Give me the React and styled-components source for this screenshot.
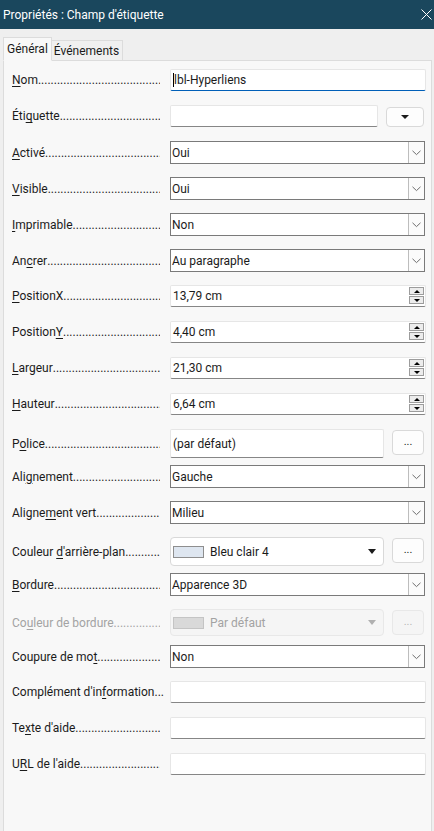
import React from "react";
import styled, { createGlobalStyle, css } from "styled-components";

const Global = createGlobalStyle`
  html, body { margin: 0; padding: 0; }
  body {
    background: #efefef;
    font-family: Roboto, "Noto Sans", sans-serif;
    font-size: 12px;
    color: #1b1b1b;
  }
  #root { width: 434px; }
`;

const Window = styled.div`
  width: 434px;
  height: 831px;
  display: flex;
  flex-direction: column;
  overflow: hidden;
  background: #efefef;
`;

const TitleBar = styled.div`
  height: 29px;
  flex: none;
  background: #1a475d;
  color: #ffffff;
  display: flex;
  align-items: center;
  justify-content: space-between;
  padding: 0 1px 0 3px;
`;

const Title = styled.span`
  font-size: 12px;
`;

const Close = styled.div`
  width: 14px;
  height: 14px;
  display: flex;
  align-items: center;
  justify-content: center;
`;

const TabStrip = styled.div`
  display: flex;
  align-items: flex-end;
  height: 32px;
  flex: none;
  padding-left: 3px;
  margin-bottom: -1px;
  position: relative;
  z-index: 1;
`;

const Tab = styled.div`
  box-sizing: border-box;
  display: flex;
  align-items: center;
  border: 1px solid #dcdcdc;
  font-size: 12px;
  color: #1b1b1b;
  ${(p) =>
    p.$active
      ? css`
          height: 24px;
          padding: 0 3px 0 3px;
          background: #f8f8f8;
          border-bottom-color: #f8f8f8;
        `
      : css`
          height: 20px;
          padding: 0 3px 0 2px;
          margin-bottom: 1px;
          background: #f0f0f0;
          border-left: none;
          border-bottom: none;
        `}
`;

const Panel = styled.div`
  flex: 1;
  margin: 0 2px 0 3px;
  background: #f8f8f8;
  border: 1px solid #dcdcdc;
  border-bottom: none;
  padding: 8px 5px 0 8px;
`;

const Row = styled.div`
  display: flex;
  align-items: flex-start;
  height: 36px;
`;

const Label = styled.div`
  box-sizing: border-box;
  width: 158px;
  flex: none;
  height: ${(p) => p.$h}px;
  display: flex;
  align-items: center;
  padding-right: 10px;
  white-space: nowrap;
  color: ${(p) => (p.$disabled ? "#a3a3a3" : "#1b1b1b")};
`;

const LabelText = styled.span`
  flex: none;
`;

const Dots = styled.span`
  flex: 1;
  min-width: 10px;
  overflow: hidden;
`;

const Key = styled.span`
  text-decoration: underline;
  text-underline-offset: 2px;
  text-decoration-thickness: 1px;
`;

const Control = styled.div`
  flex: 1;
  display: flex;
  gap: 8px;
  align-items: flex-start;
`;

const TextField = styled.div`
  box-sizing: border-box;
  flex: 1;
  height: ${(p) => p.$h || 22}px;
  background: #ffffff;
  border: 1px solid #e6e6e6;
  border-bottom: 1px solid ${(p) => (p.$focused ? "#005fb8" : "#868686")};
  border-radius: 2px;
  display: flex;
  align-items: center;
  padding-left: 2px;
  position: relative;
  color: #1b1b1b;
`;

const Caret = styled.span`
  display: inline-block;
  width: 1px;
  height: 14px;
  background: #000;
`;

const SpinBox = styled.div`
  position: absolute;
  right: 1px;
  top: 1px;
  display: flex;
  flex-direction: column;
  gap: 1px;
`;

const SpinBtn = styled.div`
  box-sizing: border-box;
  width: 15px;
  height: 8px;
  border: 1px solid #9c9c9c;
  background: #ececec;
  display: flex;
  align-items: center;
  justify-content: center;
`;

const Combo = styled.div`
  box-sizing: border-box;
  flex: 1;
  height: 23px;
  margin-right: 1px;
  background: #ffffff;
  border: 1px solid #7a7a7a;
  display: flex;
  align-items: stretch;
`;

const ComboValue = styled.div`
  flex: 1;
  display: flex;
  align-items: center;
  padding-left: 1px;
`;

const ComboBtn = styled.div`
  width: 15px;
  border-left: 1px solid #bdbdbd;
  background: #fbfbfb;
  display: flex;
  align-items: center;
  justify-content: center;
`;

const Rounded = styled.div`
  box-sizing: border-box;
  border-radius: 4px;
  border: 1px solid ${(p) => (p.$disabled ? "#e8e8e8" : "#d9d9d9")};
  background: ${(p) => (p.$disabled ? "#f5f5f5" : "#ffffff")};
  display: flex;
  align-items: center;
`;

const MenuButton = styled(Rounded)`
  width: 38px;
  height: 20px;
  margin-top: 2px;
  margin-right: 2px;
  background: #fdfdfd;
  justify-content: center;
`;

const EllipsisButton = styled(Rounded)`
  width: 32px;
  height: ${(p) => p.$h || 26}px;
  margin-top: 1px;
  margin-right: 2px;
  justify-content: center;
  align-items: flex-end;
  padding-bottom: 7px;
  font-size: 11px;
  line-height: 1;
  color: ${(p) => (p.$disabled ? "#b5b5b5" : "#1b1b1b")};
  background: ${(p) => (p.$disabled ? "#f5f5f5" : "#fdfdfd")};
`;

const ColorList = styled(Rounded)`
  flex: 1;
  height: ${(p) => p.$h}px;
  padding: 0 7px 0 2px;
  color: ${(p) => (p.$disabled ? "#a3a3a3" : "#1b1b1b")};
`;

const Swatch = styled.span`
  box-sizing: border-box;
  width: 31px;
  height: 12px;
  flex: none;
  background: ${(p) => p.$color};
  border: 1px solid ${(p) => p.$border};
  margin-right: 6px;
`;

const ColorName = styled.span`
  flex: 1;
`;

const Chevron = () => (
  <svg width="9" height="6" viewBox="0 0 9 6">
    <polyline points="0.5,0.8 4.5,4.6 8.5,0.8" fill="none" stroke="#6e6e6e" strokeWidth="1" />
  </svg>
);

const Tri = ({ up, color = "#000", w = 7, h = 4 }) => (
  <svg width={w} height={h} viewBox={`0 0 ${w} ${h}`}>
    {up ? (
      <polygon points={`0,${h} ${w},${h} ${w / 2},0`} fill={color} />
    ) : (
      <polygon points={`0,0 ${w},0 ${w / 2},${h}`} fill={color} />
    )}
  </svg>
);

const rows = [
  { l: ["", "N", "om"], c: { type: "text", value: "lbl-Hyperliens", focused: true } },
  { l: ["Éti", "q", "uette"], c: { type: "label" } },
  { l: ["", "A", "ctivé"], c: { type: "select", value: "Oui" } },
  { l: ["", "V", "isible"], c: { type: "select", value: "Oui" } },
  { l: ["", "I", "mprimable"], c: { type: "select", value: "Non" } },
  { l: ["An", "c", "rer"], c: { type: "select", value: "Au paragraphe" } },
  { l: ["", "P", "ositionX"], c: { type: "spin", value: "13,79 cm" } },
  { l: ["Position", "Y", ""], c: { type: "spin", value: "4,40 cm" } },
  { l: ["", "L", "argeur"], c: { type: "spin", value: "21,30 cm" } },
  { l: ["", "H", "auteur"], c: { type: "spin", value: "6,64 cm" } },
  { l: ["P", "o", "lice"], c: { type: "font", value: "(par défaut)" } },
  { l: ["Ali", "g", "nement"], c: { type: "select", value: "Gauche" } },
  { l: ["Aligne", "m", "ent vert"], c: { type: "select", value: "Milieu" } },
  { l: ["Couleur ", "d", "'arrière-plan"], c: { type: "color", value: "Bleu clair 4" } },
  { l: ["", "B", "ordure"], c: { type: "select", value: "Apparence 3D" } },
  { l: ["Co", "u", "leur de bordure"], c: { type: "disabled", value: "Par défaut" }, disabled: true },
  { l: ["Coupure de mo", "t", ""], c: { type: "select", value: "Non" } },
  { l: ["Complément d'in", "f", "ormation"], c: { type: "text", value: "" } },
  { l: ["Te", "x", "te d'aide"], c: { type: "text", value: "" } },
  { l: ["U", "R", "L de l'aide"], c: { type: "text", value: "" } },
];

const dotsFor = (parts) => {
  const len = parts.join("").length;
  const n = Math.max(3, Math.ceil((148 - len * 5.4) / 3) + 1);
  return ".".repeat(n);
};

function renderControl(c) {
  switch (c.type) {
    case "text":
      return (
        <TextField $focused={c.focused}>
          {c.focused && <Caret />}
          {c.value}
        </TextField>
      );
    case "label":
      return (
        <>
          <TextField />
          <MenuButton>
            <Tri w={8} h={4} color="#1b1b1b" />
          </MenuButton>
        </>
      );
    case "select":
      return (
        <Combo>
          <ComboValue>{c.value}</ComboValue>
          <ComboBtn>
            <Chevron />
          </ComboBtn>
        </Combo>
      );
    case "spin":
      return (
        <TextField>
          {c.value}
          <SpinBox>
            <SpinBtn>
              <Tri up w={6} h={3} />
            </SpinBtn>
            <SpinBtn>
              <Tri w={6} h={3} />
            </SpinBtn>
          </SpinBox>
        </TextField>
      );
    case "font":
      return (
        <>
          <TextField $h={29}>{c.value}</TextField>
          <EllipsisButton $h={25}>...</EllipsisButton>
        </>
      );
    case "color":
      return (
        <>
          <ColorList $h={29}>
            <Swatch $color="#dee6f0" $border="#8e8e8e" />
            <ColorName>{c.value}</ColorName>
            <Tri w={8} h={5} color="#1b1b1b" />
          </ColorList>
          <EllipsisButton $h={25}>...</EllipsisButton>
        </>
      );
    case "disabled":
      return (
        <>
          <ColorList $h={27} $disabled>
            <Swatch $color="#d9d9d9" $border="#c4c4c4" />
            <ColorName>{c.value}</ColorName>
            <Tri w={8} h={5} color="#b0b0b0" />
          </ColorList>
          <EllipsisButton $h={25} $disabled>...</EllipsisButton>
        </>
      );
    default:
      return null;
  }
}

const labelHeight = (c) => {
  if (c.type === "font" || c.type === "color") return 29;
  if (c.type === "disabled") return 27;
  if (c.type === "select") return 23;
  return 22;
};

export default function App() {
  return (
    <>
      <Global />
      <Window>
        <TitleBar>
          <Title>Propriétés : Champ d'étiquette</Title>
          <Close>
            <svg width="11" height="11" viewBox="0 0 11 11">
              <path d="M0.5 0.5 L10.5 10.5 M10.5 0.5 L0.5 10.5" stroke="#ffffff" strokeWidth="1" />
            </svg>
          </Close>
        </TitleBar>
        <TabStrip>
          <Tab $active>Général</Tab>
          <Tab>Événements</Tab>
        </TabStrip>
        <Panel>
          {rows.map((r, i) => (
            <Row key={i}>
              <Label $h={labelHeight(r.c)} $disabled={r.disabled}>
                <LabelText>
                  {r.l[0]}
                  <Key>{r.l[1]}</Key>
                  {r.l[2]}
                </LabelText>
                <Dots>{dotsFor(r.l)}</Dots>
              </Label>
              <Control>{renderControl(r.c)}</Control>
            </Row>
          ))}
        </Panel>
      </Window>
    </>
  );
}
